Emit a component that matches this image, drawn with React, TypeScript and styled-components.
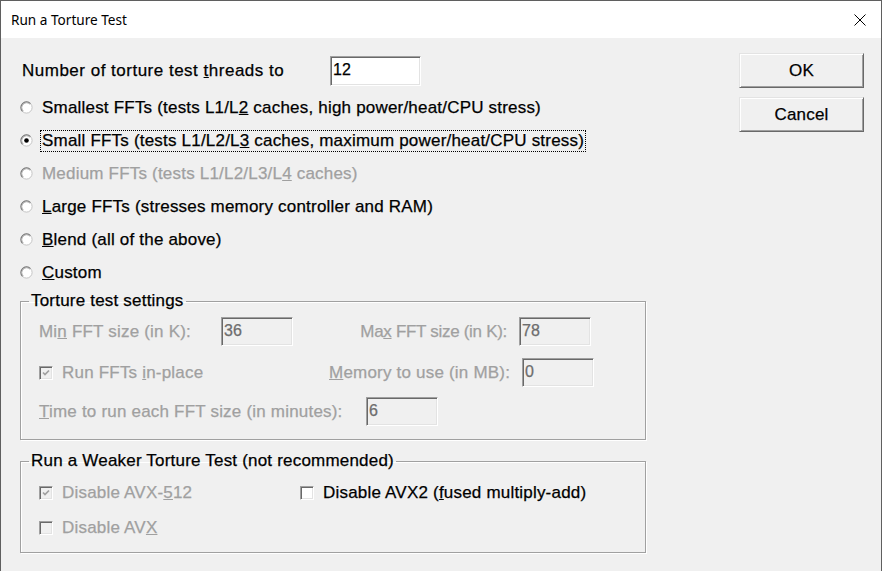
import styled, { createGlobalStyle } from 'styled-components';

const GlobalStyle = createGlobalStyle`
  html, body {
    margin: 0;
    padding: 0;
    background: #f0f0f0;
  }
  * {
    box-sizing: border-box;
  }
`;

const Window = styled.div`
  width: 882px;
  height: 571px;
  display: flex;
  flex-direction: column;
  border: 1px solid #5f5f5f;
  border-bottom: none;
  overflow: hidden;
  font-family: "Liberation Sans", Arial, sans-serif;
  font-size: 17px;
  letter-spacing: 0.2px;
  -webkit-text-stroke: 0.25px currentColor;
  color: #000;
`;

const TitleBar = styled.div`
  height: 37px;
  flex-shrink: 0;
  background: #ffffff;
  display: flex;
  align-items: center;
  justify-content: space-between;
  padding: 0 15px 0 10px;
  font-family: "Noto Sans", "Open Sans", sans-serif;
  font-size: 13.6px;
  letter-spacing: 0;
  -webkit-text-stroke: 0;
`;

const Body = styled.div`
  flex: 1;
  display: flex;
  background: #f0f0f0;
  padding: 18px 0 0 19px;
`;

const Main = styled.div`
  width: 626px;
  display: flex;
  flex-direction: column;
`;

const Side = styled.div`
  margin-left: 93px;
  margin-top: -3px;
  display: flex;
  flex-direction: column;
  gap: 9px;
`;

const Button = styled.button`
  width: 125px;
  height: 35px;
  padding: 0;
  font: inherit;
  letter-spacing: inherit;
  color: #000;
  background: #f0f0f0;
  border: 1px solid;
  border-color: #e3e3e3 #696969 #696969 #e3e3e3;
  box-shadow: inset 1px 1px #ffffff, inset -1px -1px #a0a0a0;
  cursor: pointer;
`;

const ThreadsRow = styled.div`
  height: 30px;
  display: flex;
  align-items: center;
  margin-bottom: 5px;
`;

const ThreadsLabel = styled.span`
  width: 310px;
  padding-left: 2px;
  letter-spacing: 0.5px;
`;

const Field = styled.input<{ $w: number; $h: number }>`
  width: ${(p) => p.$w}px;
  height: ${(p) => p.$h}px;
  margin: 0;
  padding: 0 0 2px 2px;
  font-family: "Liberation Sans", Arial, sans-serif;
  font-size: 16px;
  letter-spacing: 0;
  color: ${(p) => (p.disabled ? '#6d6d6d' : '#000')};
  -webkit-text-fill-color: ${(p) => (p.disabled ? '#6d6d6d' : '#000')};
  background: ${(p) => (p.disabled ? '#f0f0f0' : '#ffffff')};
  border: 1px solid;
  border-color: #a0a0a0 #ffffff #ffffff #a0a0a0;
  box-shadow: inset 1px 1px #696969, inset -1px -1px #e3e3e3;
  outline: none;
  opacity: 1;
`;

const RadioRow = styled.label<{ $disabled?: boolean }>`
  height: 33px;
  display: flex;
  align-items: center;
  gap: 9px;
  color: ${(p) => (p.$disabled ? '#a0a0a0' : '#000')};
`;

const FocusText = styled.span`
  border: 1px dotted #000;
  padding: 1px;
  margin-left: -2px;
  line-height: 18px;
`;

const Group = styled.fieldset<{ $top: number; $pt: number; $pb: number }>`
  margin: ${(p) => p.$top}px 0 0 0;
  padding: ${(p) => p.$pt}px 0 ${(p) => p.$pb}px 18px;
  border: 1px solid #a0a0a0;
  box-shadow: 1px 1px #ffffff, inset 1px 1px #ffffff;
  min-width: 0;
`;

const Legend = styled.legend`
  padding: 0 2px;
  margin-left: -10px;
  line-height: 18px;
`;

const Row = styled.div<{ $gap?: number }>`
  display: flex;
  align-items: center;
  margin-top: ${(p) => p.$gap || 0}px;
`;

const Label = styled.span<{ $w: number; $right?: number; $disabled?: boolean; $tight?: boolean }>`
  width: ${(p) => p.$w}px;
  flex-shrink: 0;
  white-space: nowrap;
  text-align: ${(p) => (p.$right !== undefined ? 'right' : 'left')};
  padding-right: ${(p) => p.$right || 0}px;
  letter-spacing: ${(p) => (p.$tight ? '-0.3px' : 'inherit')};
  color: ${(p) => (p.$disabled ? '#a0a0a0' : '#000')};
`;

const CheckItem = styled.label<{ $w?: number; $disabled?: boolean }>`
  width: ${(p) => (p.$w ? `${p.$w}px` : 'auto')};
  flex-shrink: 0;
  height: 20px;
  display: flex;
  align-items: center;
  gap: 9px;
  white-space: nowrap;
  color: ${(p) => (p.$disabled ? '#a0a0a0' : '#000')};
`;

const Box = styled.span<{ $disabled?: boolean }>`
  width: 14px;
  height: 14px;
  flex-shrink: 0;
  display: flex;
  align-items: center;
  justify-content: center;
  background: ${(p) => (p.$disabled ? '#f0f0f0' : '#ffffff')};
  border: 1px solid;
  border-color: #a0a0a0 #ffffff #ffffff #a0a0a0;
  box-shadow: inset 1px 1px #696969, inset -1px -1px #e3e3e3;
`;

const CloseIcon = () => (
  <svg width="12" height="12" viewBox="0 0 12 12">
    <path d="M0.5 0.5 L11.5 11.5 M11.5 0.5 L0.5 11.5" stroke="#000" strokeWidth="1" fill="none" />
  </svg>
);

const Radio = ({ checked }: { checked?: boolean }) => (
  <svg width="13" height="13" viewBox="0 0 13 13" style={{ flexShrink: 0 }}>
    <circle cx="6.5" cy="6.5" r="5.6" fill="#ffffff" stroke="#c4c4c4" strokeWidth="1" />
    <path d="M2.54 10.46 A5.6 5.6 0 0 1 10.46 2.54" stroke="#7a7a7a" strokeWidth="1.1" fill="none" />
    <path d="M3.25 9.75 A4.6 4.6 0 0 1 9.75 3.25" stroke="#b0b0b0" strokeWidth="0.9" fill="none" />
    {checked && <circle cx="6.5" cy="6.5" r="2.3" fill="#000" />}
  </svg>
);

const Check = ({ checked, disabled }: { checked?: boolean; disabled?: boolean }) => (
  <Box $disabled={disabled}>
    {checked && (
      <svg width="10" height="10" viewBox="0 0 10 10">
        <path d="M2 4.5 L4 6.5 L8 2.5" stroke={disabled ? '#a0a0a0' : '#000'} strokeWidth="1.7" fill="none" />
      </svg>
    )}
  </Box>
);

export default function App() {
  return (
    <>
      <GlobalStyle />
      <Window>
        <TitleBar>
          <span>Run a Torture Test</span>
          <CloseIcon />
        </TitleBar>
        <Body>
          <Main>
            <ThreadsRow>
              <ThreadsLabel>
                Number of torture test <u>t</u>hreads to
              </ThreadsLabel>
              <Field $w={91} $h={30} defaultValue="12" readOnly />
            </ThreadsRow>

            <RadioRow>
              <Radio />
              <span>
                Smallest FFTs (tests L1/L<u>2</u> caches, high power/heat/CPU stress)
              </span>
            </RadioRow>
            <RadioRow>
              <Radio checked />
              <FocusText>
                Small FFTs (tests L1/L2/L<u>3</u> caches, maximum power/heat/CPU stress)
              </FocusText>
            </RadioRow>
            <RadioRow $disabled>
              <Radio />
              <span>
                Medium FFTs (tests L1/L2/L3/L<u>4</u> caches)
              </span>
            </RadioRow>
            <RadioRow>
              <Radio />
              <span>
                <u>L</u>arge FFTs (stresses memory controller and RAM)
              </span>
            </RadioRow>
            <RadioRow>
              <Radio />
              <span>
                <u>B</u>lend (all of the above)
              </span>
            </RadioRow>
            <RadioRow>
              <Radio />
              <span>
                <u>C</u>ustom
              </span>
            </RadioRow>

            <Group $top={3} $pt={7} $pb={13}>
              <Legend>Torture test settings</Legend>
              <Row>
                <Label $w={182} $disabled>
                  Mi<u>n</u> FFT size (in K):
                </Label>
                <Field $w={72} $h={29} defaultValue="36" disabled />
                <Label $w={226} $right={12} $disabled $tight>
                  Ma<u>x</u> FFT size (in K):
                </Label>
                <Field $w={72} $h={29} defaultValue="78" disabled />
              </Row>
              <Row $gap={12}>
                <CheckItem $w={290} $disabled>
                  <Check checked disabled />
                  <span>
                    Run FFTs <u>i</u>n-place
                  </span>
                </CheckItem>
                <Label $w={193} $right={15} $disabled>
                  <u>M</u>emory to use (in MB):
                </Label>
                <Field $w={72} $h={29} defaultValue="0" disabled />
              </Row>
              <Row $gap={10}>
                <Label $w={327} $disabled>
                  <u>T</u>ime to run each FFT size (in minutes):
                </Label>
                <Field $w={72} $h={29} defaultValue="6" disabled />
              </Row>
            </Group>

            <Group $top={12} $pt={13} $pb={14}>
              <Legend>Run a Weaker Torture Test (not recommended)</Legend>
              <Row>
                <CheckItem $w={261} $disabled>
                  <Check checked disabled />
                  <span>
                    Disable AVX-<u>5</u>12
                  </span>
                </CheckItem>
                <CheckItem>
                  <Check />
                  <span>
                    Disable AVX2 (<u>f</u>used multiply-add)
                  </span>
                </CheckItem>
              </Row>
              <Row $gap={15}>
                <CheckItem $disabled>
                  <Check disabled />
                  <span>
                    Disable AV<u>X</u>
                  </span>
                </CheckItem>
              </Row>
            </Group>
          </Main>

          <Side>
            <Button>OK</Button>
            <Button>Cancel</Button>
          </Side>
        </Body>
      </Window>
    </>
  );
}
